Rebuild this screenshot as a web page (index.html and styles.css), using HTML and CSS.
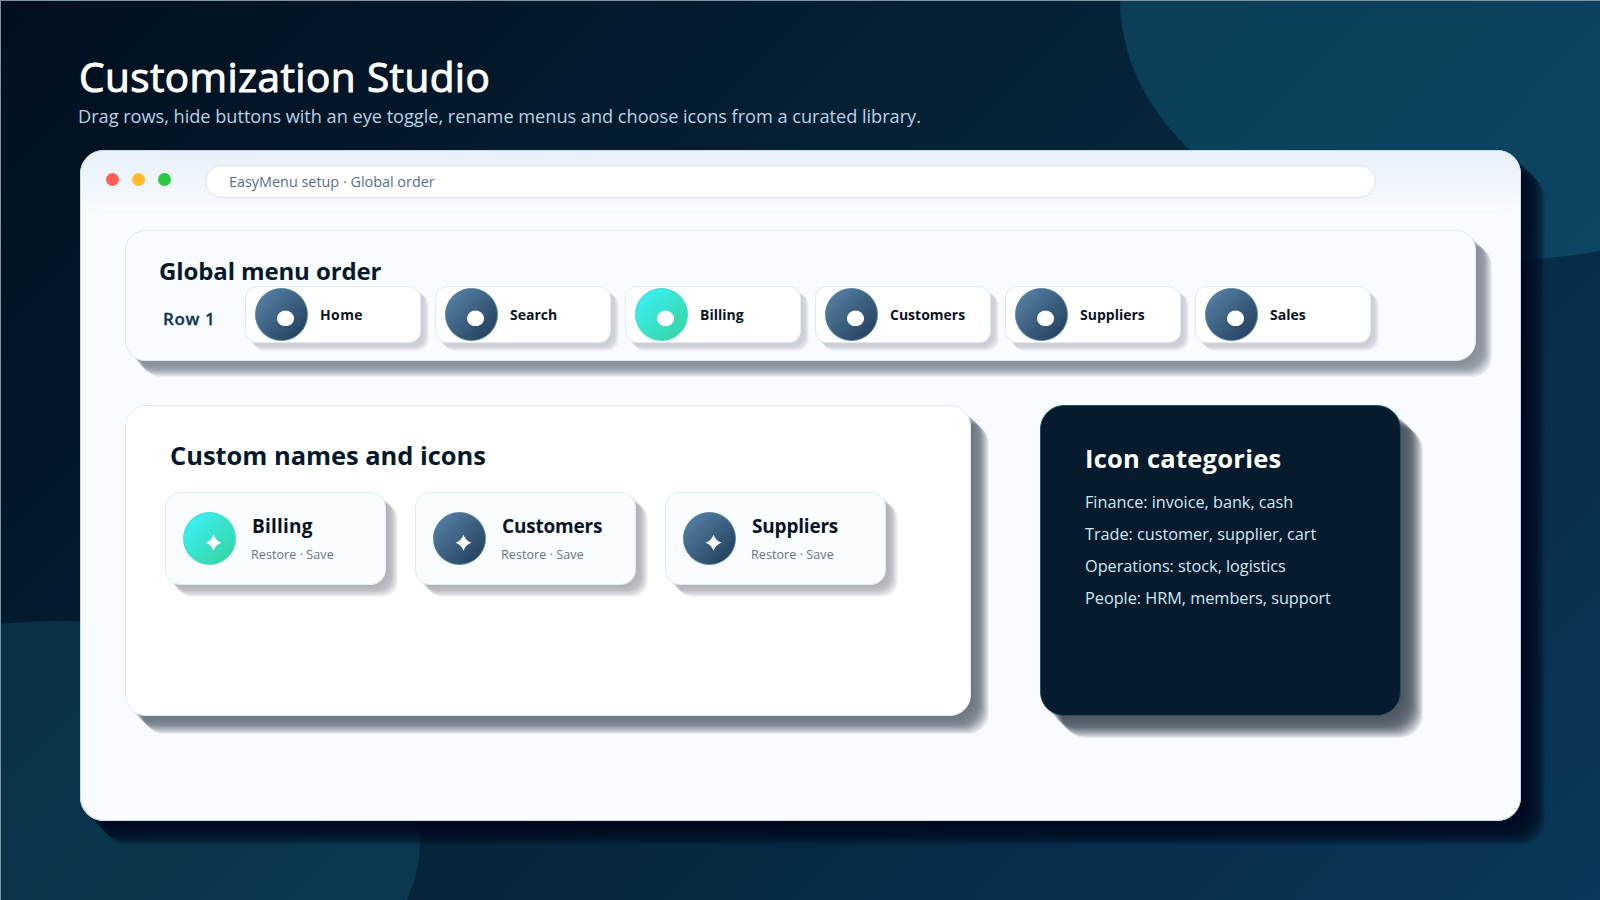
FILE: index.html
```html
<!DOCTYPE html>
<html lang="en">
<head>
<meta charset="utf-8">
<title>Customization Studio</title>
<link rel="stylesheet" href="styles.css">
</head>
<body>
<div class="stage">
  <div class="blob blob-top"></div>
  <div class="blob blob-bottom"></div>
  <header class="head">
    <h1>Customization Studio</h1>
    <p>Drag rows, hide buttons with an eye toggle, rename menus and choose icons from a curated library.</p>
  </header>
  <main class="window">
    <div class="bar">
      <i class="dot red"></i><i class="dot amber"></i><i class="dot green"></i>
      <div class="address">EasyMenu setup · Global order</div>
    </div>
    <section class="order">
      <h2>Global menu order</h2>
      <div class="row">
        <div class="row-name">Row 1</div>
        <div class="chip"><span class="orb"><svg viewBox="0 0 53 53"><path d="M28 22.700h5Q39 25.300 39 30.400T33 38.100h-5Q22 35.500 22 30.400T28 22.700Z"/></svg></span><b class="wide">Home</b></div>
        <div class="chip"><span class="orb"><svg viewBox="0 0 53 53"><path d="M28 22.700h5Q39 25.300 39 30.400T33 38.100h-5Q22 35.500 22 30.400T28 22.700Z"/></svg></span><b>Search</b></div>
        <div class="chip"><span class="orb mint"><svg viewBox="0 0 53 53"><path d="M28 22.700h5Q39 25.300 39 30.400T33 38.100h-5Q22 35.500 22 30.400T28 22.700Z"/></svg></span><b>Billing</b></div>
        <div class="chip"><span class="orb"><svg viewBox="0 0 53 53"><path d="M28 22.700h5Q39 25.300 39 30.400T33 38.100h-5Q22 35.500 22 30.400T28 22.700Z"/></svg></span><b>Customers</b></div>
        <div class="chip"><span class="orb"><svg viewBox="0 0 53 53"><path d="M28 22.700h5Q39 25.300 39 30.400T33 38.100h-5Q22 35.500 22 30.400T28 22.700Z"/></svg></span><b>Suppliers</b></div>
        <div class="chip"><span class="orb"><svg viewBox="0 0 53 53"><path d="M28 22.700h5Q39 25.300 39 30.400T33 38.100h-5Q22 35.500 22 30.400T28 22.700Z"/></svg></span><b>Sales</b></div>
      </div>
    </section>
    <div class="lower">
      <section class="names">
        <h2>Custom names and icons</h2>
        <div class="cards">
          <div class="card"><span class="orb mint"><svg viewBox="0 0 53 53"><path d="M30.500 22.700Q32.500 28.500 38.500 30.700Q32.500 32.900 30.500 38.700Q28.500 32.900 22.500 30.700Q28.500 28.500 30.500 22.700Z"/></svg></span><div class="copy"><b class="wide">Billing</b><small>Restore · Save</small></div></div>
          <div class="card"><span class="orb"><svg viewBox="0 0 53 53"><path d="M30.500 22.700Q32.500 28.500 38.500 30.700Q32.500 32.900 30.500 38.700Q28.500 32.900 22.500 30.700Q28.500 28.500 30.500 22.700Z"/></svg></span><div class="copy"><b>Customers</b><small>Restore · Save</small></div></div>
          <div class="card"><span class="orb"><svg viewBox="0 0 53 53"><path d="M30.500 22.700Q32.500 28.500 38.500 30.700Q32.500 32.900 30.500 38.700Q28.500 32.900 22.500 30.700Q28.500 28.500 30.500 22.700Z"/></svg></span><div class="copy"><b>Suppliers</b><small>Restore · Save</small></div></div>
        </div>
      </section>
      <section class="cats">
        <h2>Icon categories</h2>
        <ul>
          <li>Finance: invoice, bank, cash</li>
          <li>Trade: customer, supplier, cart</li>
          <li>Operations: stock, logistics</li>
          <li>People: HRM, members, support</li>
        </ul>
      </section>
    </div>
  </main>
</div>
</body>
</html>
```
FILE: styles.css
```css
* { box-sizing: border-box; }
body { margin: 0; font-family: "Open Sans", "Noto Sans", sans-serif; white-space: nowrap; }
h1, h2, p, ul { margin: 0; padding: 0; list-style: none; }

.stage {
  position: relative;
  width: 1600px;
  height: 900px;
  overflow: hidden;
  padding: 51px 79px 0;
  border-top: 1px solid #7b95a2;
  border-left: 1px solid #7b95a2;
  background: linear-gradient(135deg, #020f1f 0%, #06243a 50%, #0a3759 100%);
}
.blob { position: absolute; border-radius: 50%; }
.blob-top { left: 1119px; top: -261px; width: 760px; height: 520px; background: rgba(20, 106, 134, .4); }
.blob-bottom { left: -301px; top: 620px; width: 720px; height: 440px; background: rgba(20, 98, 124, .34); }

.head { position: relative; height: 98px; }
.head h1 { height: 50px; margin-left: -1px; font-size: 40.500px; line-height: 50px; font-weight: 400; letter-spacing: .42px; color: #fff; -webkit-text-stroke: 1px #fff; }
.head p { height: 28px; margin-left: -2px; font-size: 18.200px; line-height: 28px; letter-spacing: -.03px; color: #b4d3e4; }

.window {
  position: relative;
  width: 1441px;
  height: 671px;
  padding: 1px 0 0 1px;
  border-radius: 24px;
  background: #f8fbff;
  box-shadow: inset 0 0 0 1px #c9dce6,
    3px 3px 0 rgba(1,12,34,.02), 4px 4px 0 rgba(1,12,34,.02), 5px 5px 0 rgba(1,12,34,.02), 6px 6px 0 rgba(1,12,34,.02),
    7px 7px 0 rgba(1,12,34,.03), 8px 8px 0 rgba(1,12,34,.04), 9px 9px 0 rgba(1,12,34,.05), 10px 10px 0 rgba(1,12,34,.07),
    11px 11px 0 rgba(1,12,34,.09), 12px 12px 0 rgba(1,12,34,.1), 13px 13px 0 rgba(1,12,34,.1), 14px 14px 0 rgba(1,12,34,.1),
    15px 15px 0 rgba(1,12,34,.1), 16px 16px 0 rgba(1,12,34,.1), 17px 17px 0 rgba(1,12,34,.1), 18px 18px 0 rgba(1,12,34,.1),
    19px 19px 0 rgba(1,12,34,.1), 20px 20px 0 rgba(1,12,34,.1), 21px 21px 0 rgba(1,12,34,.1),
    22px 22px 0 rgba(1,12,34,.1), 23px 23px 0 rgba(1,12,34,.1), 24px 24px 0 rgba(1,12,34,.1);
}
.bar {
  display: flex;
  width: 1439px;
  height: 62px;
  padding: 14px 0 0 25px;
  border-radius: 23px;
  border-bottom: 1px solid #f1f6fa;
  background: linear-gradient(#e8f0f8, #f8fbff);
}
.dot { width: 13px; height: 13px; margin: 8px 13px 0 0; border-radius: 50%; }
.red { background: #ff5f57; }
.amber { background: #ffbd2e; }
.green { background: #28c840; }
.address { width: 1171px; height: 33px; margin-left: 21px; padding-left: 23px; border: 1px solid #d5e3ec; border-radius: 17px; background: #fff; font-size: 14.400px; line-height: 31px; color: #56708a; }

.order {
  width: 1351px;
  height: 131px;
  margin: 17px 0 0 44px;
  padding: 24px 0 0 33px;
  border: 1px solid #dfeaf2;
  border-radius: 20px;
  background: #f8fbff;
  box-shadow: 2px 2px 0 rgba(2,10,24,.012), 3px 3px 0 rgba(2,10,24,.012), 4px 4px 0 rgba(2,10,24,.012), 5px 5px 0 rgba(2,10,24,.012),
    6px 6px 0 rgba(2,10,24,.012), 7px 7px 0 rgba(2,10,24,.02), 8px 8px 0 rgba(2,10,24,.03), 9px 9px 0 rgba(2,10,28,.05),
    10px 10px 0 rgba(2,10,28,.055), 11px 11px 0 rgba(2,10,28,.055), 12px 12px 0 rgba(2,10,28,.055), 13px 13px 0 rgba(2,10,28,.055),
    14px 14px 0 rgba(2,10,28,.055), 15px 15px 0 rgba(2,10,28,.055), 16px 16px 0 rgba(2,10,28,.055);
}
h2 { font-weight: 700; color: #06182b; }
.order h2 { height: 31px; font-size: 24px; line-height: 32px; letter-spacing: -.12px; }
.row { display: flex; gap: 14px; }
.row-name { width: 72px; padding: 16px 0 0 4px; font-size: 17px; line-height: 33px; font-weight: 600; letter-spacing: .65px; -webkit-text-stroke: .3px #123250; color: #123250; }
.chip {
  display: flex;
  align-items: center;
  width: 176px;
  height: 57px;
  padding-left: 9px;
  border: 1px solid #dfeaf2;
  border-radius: 12px;
  background: #fff;
  box-shadow: 3px 3px 0 rgba(2,6,23,.01), 4px 4px 0 rgba(2,6,23,.02), 5px 5px 0 rgba(2,6,23,.035), 6px 6px 0 rgba(2,6,23,.035), 7px 7px 0 rgba(2,6,23,.035), 8px 8px 0 rgba(2,6,23,.035);
}
.chip b { margin-left: 12px; font-size: 14px; font-weight: 700; color: #0b1424; }
.chip .wide { letter-spacing: .4px; }
.orb { display: block; flex: none; width: 53px; height: 53px; border-radius: 50%; border: 1px solid #4d8199; background: linear-gradient(135deg, #5a86ab, #1f3a57); }
.orb.mint { border-color: #43dbce; background: linear-gradient(135deg, #3cf3ff, #35d399); }
.orb svg { display: block; width: 53px; height: 53px; margin: -1px; fill: #fff; }

.lower { display: flex; gap: 69px; margin: 44px 0 0 44px; }
.names {
  width: 846px;
  height: 311px;
  padding: 32px 0 0 39px;
  border: 1px solid #dfeaf2;
  border-radius: 21px;
  background: #fff;
  box-shadow: 2px 2px 0 rgba(2,17,30,.012), 3px 3px 0 rgba(2,17,30,.012), 4px 4px 0 rgba(2,17,30,.012), 5px 5px 0 rgba(2,17,30,.012),
    6px 6px 0 rgba(2,17,30,.015), 7px 7px 0 rgba(2,17,30,.02), 8px 8px 0 rgba(2,17,30,.03), 9px 9px 0 rgba(2,17,30,.04),
    10px 10px 0 rgba(2,17,30,.062), 11px 11px 0 rgba(2,17,30,.062), 12px 12px 0 rgba(2,17,30,.062), 13px 13px 0 rgba(2,17,30,.062),
    14px 14px 0 rgba(2,17,30,.062), 15px 15px 0 rgba(2,17,30,.062), 16px 16px 0 rgba(2,17,30,.062), 17px 17px 0 rgba(2,17,30,.062), 18px 18px 0 rgba(2,17,30,.062);
}
.names h2 { height: 54px; padding-left: 5px; font-size: 25.500px; line-height: 34px; letter-spacing: -.04px; }
.cards { display: flex; gap: 29px; }
.card {
  display: flex;
  width: 221px;
  height: 93px;
  padding: 19px 0 0 17px;
  border: 1px solid #dfeaf2;
  border-radius: 15px;
  background: #f9fdff;
  box-shadow: 2px 2px 0 rgba(2,6,15,.01), 3px 3px 0 rgba(2,6,15,.01), 4px 4px 0 rgba(2,6,15,.01), 5px 5px 0 rgba(2,6,15,.015),
    6px 6px 0 rgba(2,6,15,.03), 7px 7px 0 rgba(2,6,15,.04), 8px 8px 0 rgba(2,6,15,.04), 9px 9px 0 rgba(2,6,15,.04),
    10px 10px 0 rgba(2,6,15,.04), 11px 11px 0 rgba(2,6,15,.04), 12px 12px 0 rgba(2,6,15,.04);
}
.copy { margin-left: 16px; }
.copy b { display: block; font-size: 19px; line-height: 28px; font-weight: 700; letter-spacing: -.2px; color: #0b1424; }
.copy .wide { letter-spacing: .2px; }
.copy small { display: block; margin-left: -1px; font-size: 12.500px; line-height: 30px; letter-spacing: .08px; color: #64748b; }

.cats {
  width: 361px;
  height: 311px;
  padding: 35px 0 0 44px;
  border: 1px solid #1c5468;
  border-radius: 24px;
  background: #061b2e;
  box-shadow: 2px 2px 0 rgba(2,10,23,.01), 3px 3px 0 rgba(2,10,23,.01), 4px 4px 0 rgba(2,10,23,.01), 5px 5px 0 rgba(2,10,23,.01),
    6px 6px 0 rgba(2,10,23,.01), 7px 7px 0 rgba(2,10,23,.015), 8px 8px 0 rgba(2,10,23,.02), 9px 9px 0 rgba(2,10,23,.03),
    10px 10px 0 rgba(2,10,23,.04), 11px 11px 0 rgba(2,10,23,.05), 12px 12px 0 rgba(2,10,23,.07), 13px 13px 0 rgba(2,10,23,.07),
    14px 14px 0 rgba(2,10,23,.07), 15px 15px 0 rgba(2,10,23,.07), 16px 16px 0 rgba(2,10,23,.07), 17px 17px 0 rgba(2,10,23,.07),
    18px 18px 0 rgba(2,10,23,.07), 19px 19px 0 rgba(2,10,23,.07), 20px 20px 0 rgba(2,10,23,.07), 21px 21px 0 rgba(2,10,23,.07), 22px 22px 0 rgba(2,10,23,.07);
}
.cats h2 { height: 45px; font-size: 25.500px; line-height: 34px; letter-spacing: .25px; color: #fff; }
.cats li { height: 32px; font-size: 16.300px; line-height: 32px; letter-spacing: -.03px; color: #cfe8f7; }
```
